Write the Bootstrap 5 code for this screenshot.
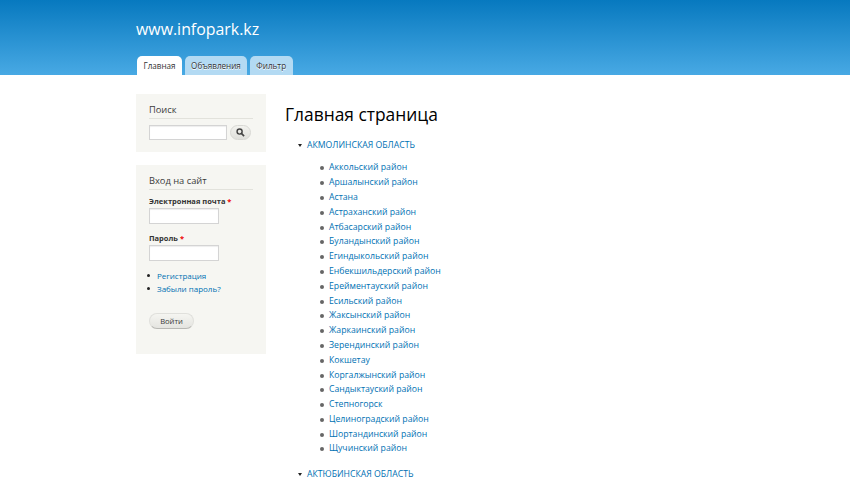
<!DOCTYPE html>
<html lang="ru">
<head>
    <meta charset="UTF-8">
    <meta name="viewport" content="width=device-width, initial-scale=1.0">
    <title>www.infopark.kz</title>
    <link href="https://cdn.jsdelivr.net/npm/bootstrap@5.3.0/dist/css/bootstrap.min.css" rel="stylesheet">
    <style>
        html, body { height: 478px; overflow: hidden; }
        body { font-family: "Open Sans", "Noto Sans", sans-serif; font-size: 8.7px; color: #3b3b3b; background: #fff; }
        a { color: #0071b3; text-decoration: none; }
        .site-head { height: 75px; background: linear-gradient(#0779bf, #48a9e4); padding: 0 136px; }
        .site-name { color: #fff; font-size: 15.9px; line-height: 24px; padding-top: 17px; height: 56px; }
        .site-tabs { gap: 2.5px; padding-left: 1px; }
        .site-tabs a { display: block; height: 19px; line-height: 20px; padding: 0 6.5px; font-size: 8.1px; color: #333; background: #b3daf3; border-radius: 5px 5px 0 0; text-shadow: 0 1px 0 #fff; }
        .site-tabs a.on { background: #fff; }
        .page-body { padding: 19px 136px 0; gap: 19px; }
        .side-col { width: 130px; flex: none; }
        .side-block { background: #f6f6f2; padding: 9px 13px 12px; margin-bottom: 13px; }
        .side-title { font-size: 9.3px; line-height: 14px; color: #3b3b3b; border-bottom: 1px solid #e2e2dc; padding-bottom: 1px; margin-bottom: 6px; }
        .side-input { display: block; height: 15px; background: #fff; border: 1px solid #d4d4d4; box-shadow: inset 0 1px 1px #eee; }
        .search-btn { width: 21px; height: 15px; border-radius: 8px; border: 1px solid #d8d8d4; background: linear-gradient(#f2f2ee, #e0e0dc); margin-left: 3px; }
        .login-title { margin-bottom: 5px; }
        .login-form .side-input { width: 70px; height: 16px; }
        .login-form .side-input + .field-label { margin-top: 8px; }
        .field-label { font-weight: 700; font-size: 7.5px; line-height: 12px; color: #333; margin-bottom: 1px; }
        .req { color: #e00; }
        .side-links { margin: 8px 0 0; padding-left: 8px; line-height: 13px; font-size: 8px; list-style: none; }
        .side-links li { position: relative; }
        .side-links li::before { content: ""; position: absolute; left: -10px; top: 5px; width: 3px; height: 3px; border-radius: 50%; background: #222; }
        .login-btn { font-size: 7.6px; width: 45px; height: 16px; line-height: 14px; padding: 0; color: #3a3a3a; border-radius: 8px; border: 1px solid #e0e0dc; border-bottom-color: #b8b8b4; background: linear-gradient(#f5f5f1, #e4e4e0); margin: 18px 0 13px; display: block; }
        .page-title { font-size: 17.4px; line-height: 24px; font-weight: 400; color: #000; margin: 0 0 11.5px; padding-top: 8px; }
        .region-tree, .region-tree ul { margin: 0; padding: 0; list-style: none; }
        .region-head { padding-left: 22px; line-height: 14.85px; position: relative; }
        .region-head::before { content: ""; position: absolute; left: 12.5px; top: 6px; border: 2.5px solid transparent; border-top: 3px solid #222; border-bottom: 0; }
        .region-tree ul { padding: 8px 0 11px 44px; }
        .region-tree ul li { line-height: 14.8px; position: relative; }
        .region-tree ul li::before { content: ""; position: absolute; left: -9px; top: 6px; width: 4px; height: 4px; border-radius: 50%; background: #666; }
    </style>
</head>
<body>
    <header class="site-head">
        <div class="site-name">www.infopark.kz</div>
        <nav class="site-tabs d-flex">
            <a class="on" href="#">Главная</a>
            <a href="#">Объявления</a>
            <a href="#">Фильтр</a>
        </nav>
    </header>

    <div class="page-body d-flex">
        <aside class="side-col">
            <section class="side-block">
                <div class="side-title">Поиск</div>
                <form class="d-flex align-items-center">
                    <input class="side-input" style="width:78px" type="text">
                    <button class="search-btn d-flex align-items-center justify-content-center p-0" type="button">
                        <svg width="9" height="9" viewBox="0 0 10 10"><circle cx="4" cy="4" r="2.8" fill="none" stroke="#444" stroke-width="1.6"/><path d="M6 6l3 3" stroke="#444" stroke-width="1.8"/></svg>
                    </button>
                </form>
            </section>
            <section class="side-block mb-0">
                <div class="side-title login-title">Вход на сайт</div>
                <form class="login-form">
                    <div class="field-label">Электронная почта <span class="req">*</span></div>
                    <input class="side-input" type="text">
                    <div class="field-label">Пароль <span class="req">*</span></div>
                    <input class="side-input" type="password">
                    <ul class="side-links">
                        <li><a href="#">Регистрация</a></li>
                        <li><a href="#">Забыли пароль?</a></li>
                    </ul>
                    <button class="login-btn" type="button">Войти</button>
                </form>
            </section>
        </aside>

        <main class="flex-grow-1">
            <h1 class="page-title">Главная страница</h1>
            <div class="region-tree">
                <div class="region-head"><a href="#">АКМОЛИНСКАЯ ОБЛАСТЬ</a></div>
                <ul id="districts"></ul>
                <div class="region-head"><a href="#">АКТЮБИНСКАЯ ОБЛАСТЬ</a></div>
            </div>
        </main>
    </div>

    <script>
        const districts = ['Аккольский район', 'Аршалынский район', 'Астана', 'Астраханский район', 'Атбасарский район',
            'Буландынский район', 'Егиндыкольский район', 'Енбекшильдерский район', 'Ерейментауский район', 'Есильский район',
            'Жаксынский район', 'Жаркаинский район', 'Зерендинский район', 'Кокшетау', 'Коргалжынский район',
            'Сандыктауский район', 'Степногорск', 'Целиноградский район', 'Шортандинский район', 'Щучинский район'];
        document.getElementById('districts').innerHTML = districts.map(d => `<li><a href="#">${d}</a></li>`).join('');
    </script>
    <script src="https://cdn.jsdelivr.net/npm/bootstrap@5.3.0/dist/js/bootstrap.bundle.min.js"></script>
</body>
</html>
